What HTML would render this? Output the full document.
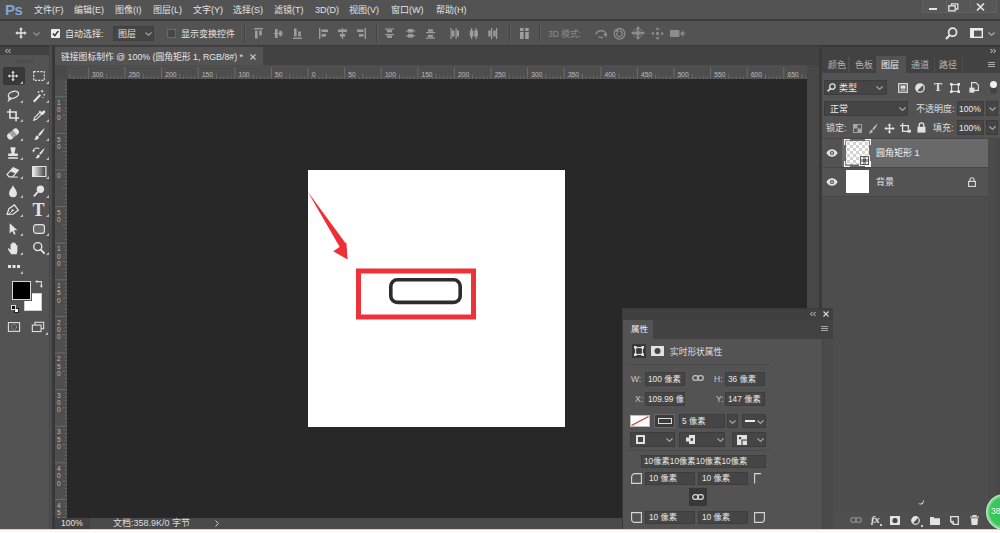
<!DOCTYPE html>
<html lang="zh-CN">
<head>
<meta charset="utf-8">
<title>链接图标制作 @ 100% (圆角矩形 1, RGB/8#) *</title>
<style>
*{box-sizing:border-box;margin:0;padding:0}
html,body{width:1000px;height:533px;overflow:hidden;background:#535353}
body{position:relative;font-family:"Liberation Sans","Noto Sans CJK SC",sans-serif;font-size:10px;color:#dcdcdc;line-height:1}
.a{position:absolute}
.t{position:absolute;white-space:nowrap;line-height:12px;height:12px}
/* main bars */
#menubar{left:0;top:0;width:1000px;height:21px;background:#535353;border-bottom:2px solid #3d3d3d}
#optbar{left:0;top:21px;width:1000px;height:26px;background:#535353;border-bottom:2px solid #3a3a3a}
#tabstrip{left:54px;top:46px;width:766px;height:19px;background:#424242}
#doctab{left:55px;top:47px;width:208px;height:18px;background:#535353}
#toolbox{left:0;top:46px;width:49px;height:483px;background:#535353}
#toolhead{left:0;top:46px;width:51px;height:9px;background:#424242;border-top:1px solid #383838}
#gap1{left:49px;top:46px;width:6px;height:483px;background:linear-gradient(90deg,#474747 0,#474747 1px,#4e4e4e 1px,#4e4e4e 3px,#383838 3px)}
#canvas{left:67px;top:79px;width:740px;height:439px;background:#282828}
#vscroll{left:807px;top:65px;width:12px;height:464px;background:#474747}
#status{left:55px;top:518px;width:752px;height:11px;background:#4a4a4a}
#bottom{left:0;top:529px;width:1000px;height:4px;background:#fbfaf6;border-top:1px solid #d6d2c8}
#doc{left:308px;top:170px;width:257px;height:257px;background:#fff}
#rpanel{left:822px;top:46px;width:178px;height:483px;background:#535353}

.m{position:absolute;top:4px;font-size:9px;line-height:12px;color:#e2e2e2;white-space:nowrap}
#ps{left:5px;top:1px;font-size:15px;line-height:18px;font-weight:bold;color:#7fa6d2;letter-spacing:-0.4px}
.o{position:absolute;font-size:9px;line-height:12px;color:#e2e2e2;white-space:nowrap}
svg{position:absolute;overflow:visible}

.p{position:absolute;font-size:9px;line-height:12px;height:12px;color:#dedede;white-space:nowrap}
.bx{position:absolute;background:#454545;border:1px solid #3d3d3d}
</style>
</head>
<body>
<div class="a" id="menubar">
<div class="a" id="ps">Ps</div>
<div class="m" style="left:34px">文件(F)</div>
<div class="m" style="left:74px">编辑(E)</div>
<div class="m" style="left:115px">图像(I)</div>
<div class="m" style="left:153px">图层(L)</div>
<div class="m" style="left:193px">文字(Y)</div>
<div class="m" style="left:233px">选择(S)</div>
<div class="m" style="left:274px">滤镜(T)</div>
<div class="m" style="left:315px">3D(D)</div>
<div class="m" style="left:349px">视图(V)</div>
<div class="m" style="left:391px">窗口(W)</div>
<div class="m" style="left:436px">帮助(H)</div>
<div class="a" style="left:922px;top:0;width:75px;height:13px;background:#575757;border:1px solid #616161;border-top:0"></div>
<div class="a" style="left:946px;top:0;width:1px;height:13px;background:#616161"></div>
<div class="a" style="left:970px;top:0;width:1px;height:13px;background:#616161"></div>
<div class="a" style="left:929px;top:8px;width:8px;height:2px;background:#e4e4e4"></div>
<svg style="left:948px;top:3px" width="11" height="9" viewBox="0 0 11 9"><path d="M3.5 2.5V0.8H9.8V6H8" fill="none" stroke="#dedede" stroke-width="1.3"/><rect x="0.8" y="2.8" width="6.4" height="5" fill="none" stroke="#dedede" stroke-width="1.4"/></svg>
<svg style="left:976px;top:3px" width="9" height="8" viewBox="0 0 9 8"><path d="M1 0.5L8 7.5M8 0.5L1 7.5" stroke="#e6e6e6" stroke-width="1.7"/></svg>
</div>
<div class="a" id="optbar">
<svg style="left:15px;top:6px" width="12" height="12" viewBox="0 0 12 12"><path d="M6 0.3L8 2.6H6.7V5.3H9.4V4L11.7 6L9.4 8V6.7H6.7V9.4H8L6 11.7L4 9.4H5.3V6.7H2.6V8L0.3 6L2.6 4V5.3H5.3V2.6H4Z" fill="#e6e6e6"/></svg>
<svg style="left:33px;top:11px" width="7" height="4" viewBox="0 0 7 4"><path d="M0.5 0.5L3.5 3.3L6.5 0.5" fill="none" stroke="#9c9c9c" stroke-width="1.1"/></svg>
<div class="a" style="left:51px;top:8px;width:9px;height:9px;background:#ececec;border-radius:1px"></div>
<svg style="left:52px;top:9px" width="7" height="7" viewBox="0 0 7 7"><path d="M0.8 3.4L2.8 5.6L6.3 1" fill="none" stroke="#333" stroke-width="1.5"/></svg>
<div class="o" style="left:65px;top:7px">自动选择:</div>
<div class="a" style="left:113px;top:5px;width:41px;height:15px;background:#454545;border:1px solid #3e3e3e"></div>
<div class="o" style="left:118px;top:7px">图层</div>
<svg style="left:145px;top:11px" width="7" height="4" viewBox="0 0 7 4"><path d="M0.5 0.5L3.5 3.3L6.5 0.5" fill="none" stroke="#a8a8a8" stroke-width="1.1"/></svg>
<div class="a" style="left:167px;top:8px;width:9px;height:9px;background:#474747;border:1px solid #6a6a6a"></div>
<div class="o" style="left:181px;top:7px">显示变换控件</div>
<div class="a" style="left:244px;top:3px;width:1px;height:19px;background:#444"></div><div class="a" style="left:245px;top:3px;width:1px;height:19px;background:#5d5d5d"></div>
<svg style="left:254px;top:7px" width="9" height="11" viewBox="0 0 9 11"><rect x="0" y="0" width="9" height="1.4" fill="#9d9d9d"/><rect x="1" y="2.5" width="2.6" height="8" fill="#9d9d9d"/><rect x="5.2" y="2.5" width="2.6" height="5" fill="#9d9d9d"/></svg>
<svg style="left:274px;top:7px" width="9" height="11" viewBox="0 0 9 11"><rect x="0" y="4.8" width="9" height="1.2" fill="#9d9d9d"/><rect x="1" y="1" width="2.6" height="9" fill="#9d9d9d"/><rect x="5.2" y="2.8" width="2.6" height="5.4" fill="#9d9d9d"/></svg>
<svg style="left:293px;top:7px" width="9" height="11" viewBox="0 0 9 11"><rect x="0" y="9.6" width="9" height="1.4" fill="#9d9d9d"/><rect x="1" y="0.5" width="2.6" height="8" fill="#9d9d9d"/><rect x="5.2" y="3.5" width="2.6" height="5" fill="#9d9d9d"/></svg>
<svg style="left:319px;top:7px" width="9" height="11" viewBox="0 0 9 11"><rect x="0" y="0" width="1.4" height="11" fill="#9d9d9d"/><rect x="2.5" y="1.5" width="6.5" height="2.6" fill="#9d9d9d"/><rect x="2.5" y="6" width="4.5" height="2.6" fill="#9d9d9d"/></svg>
<svg style="left:338px;top:7px" width="9" height="11" viewBox="0 0 9 11"><rect x="3.9" y="0" width="1.2" height="11" fill="#9d9d9d"/><rect x="0" y="1.5" width="9" height="2.6" fill="#9d9d9d"/><rect x="1.8" y="6" width="5.4" height="2.6" fill="#9d9d9d"/></svg>
<svg style="left:357px;top:7px" width="9" height="11" viewBox="0 0 9 11"><rect x="7.6" y="0" width="1.4" height="11" fill="#9d9d9d"/><rect x="0" y="1.5" width="6.5" height="2.6" fill="#9d9d9d"/><rect x="2" y="6" width="4.5" height="2.6" fill="#9d9d9d"/></svg>
<div class="a" style="left:376px;top:3px;width:1px;height:19px;background:#444"></div><div class="a" style="left:377px;top:3px;width:1px;height:19px;background:#5d5d5d"></div>
<svg style="left:385px;top:7px" width="9" height="11" viewBox="0 0 9 11"><rect x="0" y="0.5" width="9" height="1.2" fill="#9d9d9d"/><rect x="2" y="2" width="5" height="2.4" fill="#9d9d9d"/><rect x="0" y="6" width="9" height="1.2" fill="#9d9d9d"/><rect x="2" y="7.5" width="5" height="2.4" fill="#9d9d9d"/></svg>
<svg style="left:406px;top:7px" width="9" height="11" viewBox="0 0 9 11"><rect x="0" y="2.3" width="9" height="1.2" fill="#9d9d9d"/><rect x="2" y="1" width="5" height="3.6" fill="#9d9d9d"/><rect x="0" y="7.3" width="9" height="1.2" fill="#9d9d9d"/><rect x="2" y="6" width="5" height="3.6" fill="#9d9d9d"/></svg>
<svg style="left:426px;top:7px" width="9" height="11" viewBox="0 0 9 11"><rect x="0" y="4" width="9" height="1.2" fill="#9d9d9d"/><rect x="2" y="1.3" width="5" height="2.4" fill="#9d9d9d"/><rect x="0" y="9.5" width="9" height="1.2" fill="#9d9d9d"/><rect x="2" y="6.8" width="5" height="2.4" fill="#9d9d9d"/></svg>
<svg style="left:450px;top:7px" width="9" height="11" viewBox="0 0 9 11"><rect x="0.5" y="0" width="1.2" height="11" fill="#9d9d9d"/><rect x="2" y="2.5" width="2.4" height="6" fill="#9d9d9d"/><rect x="5.5" y="0" width="1.2" height="11" fill="#9d9d9d"/><rect x="7" y="2.5" width="2" height="6" fill="#9d9d9d"/></svg>
<svg style="left:469px;top:7px" width="9" height="11" viewBox="0 0 9 11"><rect x="2" y="0" width="1.2" height="11" fill="#9d9d9d"/><rect x="0.8" y="2.5" width="3.6" height="6" fill="#9d9d9d"/><rect x="6.5" y="0" width="1.2" height="11" fill="#9d9d9d"/><rect x="5.3" y="2.5" width="3.6" height="6" fill="#9d9d9d"/></svg>
<svg style="left:488px;top:7px" width="9" height="11" viewBox="0 0 9 11"><rect x="3" y="0" width="1.2" height="11" fill="#9d9d9d"/><rect x="0.3" y="2.5" width="2.4" height="6" fill="#9d9d9d"/><rect x="8" y="0" width="1.2" height="11" fill="#9d9d9d"/><rect x="5.3" y="2.5" width="2.4" height="6" fill="#9d9d9d"/></svg>
<div class="a" style="left:509px;top:3px;width:1px;height:19px;background:#444"></div><div class="a" style="left:510px;top:3px;width:1px;height:19px;background:#5d5d5d"></div>
<svg style="left:520px;top:7px" width="9" height="11" viewBox="0 0 9 11"><rect x="0" y="0" width="3.6" height="3" fill="#9d9d9d"/><rect x="5.2" y="0" width="3.6" height="3" fill="#9d9d9d"/><rect x="0" y="4" width="3.6" height="7" fill="#9d9d9d"/><rect x="5.2" y="4" width="3.6" height="7" fill="#9d9d9d"/></svg>
<div class="a" style="left:539px;top:3px;width:1px;height:19px;background:#444"></div><div class="a" style="left:540px;top:3px;width:1px;height:19px;background:#5d5d5d"></div>
<div class="o" style="left:548px;top:7px;color:#8a8a8a;font-size:8.6px">3D 模式:</div>
<svg style="left:594px;top:6px" width="14" height="13" viewBox="0 0 14 13"><path d="M2 7.5A5 3.6 0 1 1 11.5 8.8" fill="none" stroke="#8c8c8c" stroke-width="1.5"/><path d="M9 7L12 10.5L13.5 6.5Z" fill="#8c8c8c"/><path d="M4.5 9.5A4 2 0 0 0 9 10.5" fill="none" stroke="#8c8c8c" stroke-width="1.3"/></svg>
<svg style="left:613px;top:6px" width="13" height="13" viewBox="0 0 13 13"><circle cx="6.5" cy="6.8" r="5.3" fill="none" stroke="#8c8c8c" stroke-width="1.3"/><path d="M3.8 6A2.8 2.8 0 1 0 6.5 4" fill="none" stroke="#8c8c8c" stroke-width="1.3"/><path d="M2 3.5L5.5 2.5L4.8 6Z" fill="#8c8c8c"/></svg>
<svg style="left:631px;top:5px" width="14" height="14" viewBox="0 0 14 14"><path d="M7 0L9.3 3H7.9V6.1H11V4.7L14 7L11 9.3V7.9H7.9V11H9.3L7 14L4.7 11H6.1V7.9H3V9.3L0 7L3 4.7V6.1H6.1V3H4.7Z" fill="#8c8c8c"/><path d="M3 3L11 11M11 3L3 11" stroke="#8c8c8c" stroke-width="0.9"/></svg>
<svg style="left:651px;top:6px" width="13" height="13" viewBox="0 0 13 13"><path d="M6.5 0L8.6 2.8H4.4ZM6.5 13L8.6 10.2H4.4ZM0 6.5L2.8 4.4V8.6ZM13 6.5L10.2 4.4V8.6Z" fill="#8c8c8c"/><circle cx="6.5" cy="6.5" r="1.7" fill="#8c8c8c"/></svg>
<svg style="left:670px;top:8px" width="15" height="9" viewBox="0 0 15 9"><rect x="0" y="1" width="9.5" height="7" rx="1" fill="#8c8c8c"/><path d="M10 4.5L13.5 1.2V7.8Z" fill="#8c8c8c"/><path d="M13.5 3L15 4.5L13.5 6" fill="none" stroke="#8c8c8c" stroke-width="0.9"/></svg>
<svg style="left:945px;top:6px" width="13" height="13" viewBox="0 0 13 13"><circle cx="7.6" cy="5.2" r="4" fill="none" stroke="#e8e8e8" stroke-width="1.7"/><path d="M4.6 8.2L1 12" stroke="#e8e8e8" stroke-width="2"/></svg>
<svg style="left:970px;top:7px" width="13" height="10" viewBox="0 0 13 10"><rect x="0.7" y="0.7" width="11.6" height="8.6" fill="#555" stroke="#ececec" stroke-width="1.4"/><rect x="1" y="1" width="11" height="1.6" fill="#ececec"/><rect x="1" y="1" width="3" height="8" fill="#ececec"/></svg>
<svg style="left:988px;top:11px" width="7" height="4" viewBox="0 0 7 4"><path d="M0.5 0.5L3.5 3.3L6.5 0.5" fill="none" stroke="#b4b4b4" stroke-width="1.1"/></svg>
</div>
<div class="a" id="tabstrip"></div>
<div class="a" id="doctab"></div>
<div class="t" id="tabtxt" style="left:61px;top:51px;font-size:8.8px;color:#e6e6e6">链接图标制作 @ 100% (圆角矩形 1, RGB/8#) *</div>
<svg style="left:250px;top:54px" width="6" height="6" viewBox="0 0 6 6"><path d="M0.5 0.5L5.5 5.5M5.5 0.5L0.5 5.5" stroke="#c8c8c8" stroke-width="1.1"/></svg>
<div class="a" id="toolbox"></div>
<div class="a" id="toolhead"></div>
<svg style="left:5px;top:49px" width="6" height="4" viewBox="0 0 6 4"><path d="M2.5 0L0.5 2L2.5 4M5.5 0L3.5 2L5.5 4" fill="none" stroke="#d0d0d0" stroke-width="1"/></svg>
<div class="a" style="left:17px;top:60px;width:17px;height:1px;background:#484848"></div><div class="a" style="left:17px;top:62px;width:17px;height:1px;background:#484848"></div>
<div class="a" style="left:3px;top:67px;width:22px;height:18px;background:#383838;border-radius:2px"></div>
<svg style="left:7px;top:70px" width="12" height="12" viewBox="0 0 16 16"><path d="M8 1L10.4 3.8H8.8V7.2H12.2V5.6L15 8L12.2 10.4V8.8H8.8V12.2H10.4L8 15L5.6 12.2H7.2V8.8H3.8V10.4L1 8L3.8 5.6V7.2H7.2V3.8H5.6Z" fill="#e4e4e4"/></svg>
<svg style="left:31.5px;top:69px" width="14" height="14" viewBox="0 0 16 16"><rect x="2" y="3" width="12" height="10" fill="none" stroke="#e4e4e4" stroke-width="1.3" stroke-dasharray="2.4 1.4"/></svg>
<svg style="left:6px;top:88.5px" width="14" height="14" viewBox="0 0 16 16"><ellipse cx="8.5" cy="6.5" rx="6" ry="3.8" transform="rotate(-18 8.5 6.5)" fill="none" stroke="#e4e4e4" stroke-width="1.5"/><path d="M4 9.5C2.5 10.5 2.6 12.6 4.6 12.6C6.2 12.6 5.8 10.5 4.4 10.8C3.6 11 3 12.8 2.2 14.5" fill="none" stroke="#e4e4e4" stroke-width="1.2"/></svg>
<svg style="left:31.5px;top:88.5px" width="14" height="14" viewBox="0 0 16 16"><path d="M2 14.5L9.5 6.5" stroke="#e4e4e4" stroke-width="2.4"/><path d="M11.5 1V4M10 2.5H13M14 5.5V7.5M13 6.5H15M7.5 2.5V4.5M6.5 3.5H8.5M12.5 9V10.4" stroke="#e4e4e4" stroke-width="1"/></svg>
<svg style="left:6px;top:107.5px" width="14" height="14" viewBox="0 0 16 16"><path d="M4.5 1V11.5H15M1 4.5H11.5V15" fill="none" stroke="#e4e4e4" stroke-width="1.8"/></svg>
<svg style="left:31.5px;top:107.5px" width="14" height="14" viewBox="0 0 16 16"><path d="M2 14L3 11L9 5L11 7L5 13Z" fill="none" stroke="#e4e4e4" stroke-width="1.3"/><path d="M8.5 3.5L12.5 7.5" stroke="#e4e4e4" stroke-width="1.8"/><path d="M10 5.8L12.6 3.2A1.6 1.6 0 0 1 14.9 5.4L12.2 8Z" fill="#e4e4e4"/></svg>
<svg style="left:6px;top:126.5px" width="14" height="14" viewBox="0 0 16 16"><g transform="rotate(-40 8 8)"><rect x="0.5" y="4.3" width="15" height="7.4" rx="3.4" fill="#e4e4e4"/><rect x="5.4" y="4.3" width="5.2" height="7.4" fill="#535353" opacity="0.55"/><circle cx="7" cy="6.5" r="0.6" fill="#e4e4e4"/><circle cx="9" cy="6.5" r="0.6" fill="#e4e4e4"/><circle cx="7" cy="9.5" r="0.6" fill="#e4e4e4"/><circle cx="9" cy="9.5" r="0.6" fill="#e4e4e4"/></g></svg>
<svg style="left:31.5px;top:126.5px" width="14" height="14" viewBox="0 0 16 16"><path d="M14.5 1.2C12 3 8.5 6.5 7 9L8.6 10.4C11 8.5 13.5 4.5 14.5 1.2Z" fill="#e4e4e4"/><path d="M6.3 9.8C4.5 9.8 4 11.5 3.8 12.6C3.6 13.6 2.6 14.2 1.8 14.4C4.5 15.3 7.8 14 7.9 11.3Z" fill="#e4e4e4"/></svg>
<svg style="left:6px;top:145.5px" width="14" height="14" viewBox="0 0 16 16"><path d="M6 1.5H10C11 1.5 11.2 2.5 10.8 3.5L9.8 7V8.5H13.5V11.5H2.5V8.5H6.2V7L5.2 3.5C4.8 2.5 5 1.5 6 1.5Z" fill="#e4e4e4"/><rect x="2.5" y="12.8" width="11" height="1.8" fill="#e4e4e4"/></svg>
<svg style="left:31.5px;top:145.5px" width="14" height="14" viewBox="0 0 16 16"><path d="M14.5 2.2C12.2 3.8 9.5 6.6 8.2 8.8L9.6 10C11.6 8.4 13.6 5.2 14.5 2.2Z" fill="#e4e4e4"/><path d="M7.6 9.6C6 9.6 5.6 11 5.4 12C5.2 13 4.4 13.5 3.6 13.7C6 14.5 9 13.4 9 11Z" fill="#e4e4e4"/><path d="M1.5 6A4 4 0 0 1 8.3 3.4" fill="none" stroke="#e4e4e4" stroke-width="1.2"/><path d="M0.3 4.6L1.6 7.4L3.6 5.2Z" fill="#e4e4e4"/></svg>
<svg style="left:6px;top:164.5px" width="14" height="14" viewBox="0 0 16 16"><path d="M1.2 10.8L8.2 3.2L14.2 6L7.4 13.6H3.6Z" fill="none" stroke="#e4e4e4" stroke-width="1.3"/><path d="M8.2 3.2L14.2 6L10.8 9.8L4.8 7Z" fill="#e4e4e4"/><path d="M7.4 13.8H13.5" stroke="#e4e4e4" stroke-width="1.2"/></svg>
<svg style="left:31.5px;top:166px" preserveAspectRatio="none" width="14.5" height="11" viewBox="0 0 14 13"><defs><linearGradient id="gr" x1="0" x2="1" y1="0" y2="0"><stop offset="0" stop-color="#f2f2f2"/><stop offset="1" stop-color="#3c3c3c"/></linearGradient></defs><rect x="0.6" y="0.6" width="12.8" height="11.8" fill="url(#gr)" stroke="#e4e4e4" stroke-width="1.2"/></svg>
<svg style="left:6px;top:183.5px" width="14" height="14" viewBox="0 0 16 16"><path d="M8 1.5C9.5 5 12.5 7.5 12.5 10.5A4.5 4.5 0 0 1 3.5 10.5C3.5 7.5 6.5 5 8 1.5Z" fill="#e4e4e4"/></svg>
<svg style="left:31.5px;top:183.5px" width="14" height="14" viewBox="0 0 16 16"><circle cx="9.6" cy="6" r="4.2" fill="#e4e4e4"/><path d="M6.6 9L2.2 14.2" stroke="#e4e4e4" stroke-width="2"/></svg>
<svg style="left:6px;top:202.5px" width="14" height="14" viewBox="0 0 16 16"><path d="M2 14L3.2 7.2L8.8 2L14 7.2L8.8 12.8Z" fill="none" stroke="#e4e4e4" stroke-width="1.4" transform="rotate(8 8 8)"/><circle cx="7.6" cy="8.4" r="1.3" fill="#e4e4e4"/><path d="M2.2 13.8L7 9" stroke="#e4e4e4" stroke-width="1"/></svg>
<div class="a" style="left:31.5px;top:200.5px;width:14px;height:18px;font-family:'Liberation Serif',serif;font-weight:bold;font-size:18px;line-height:18px;color:#e4e4e4;text-align:center">T</div>
<svg style="left:6px;top:221.5px" width="14" height="14" viewBox="0 0 16 16"><path d="M4.2 1.5V13L7.2 10.2L9.2 14.6L11 13.8L9 9.5H13Z" fill="#e4e4e4"/></svg>
<svg style="left:31.5px;top:221.5px" width="14" height="14" viewBox="0 0 16 16"><rect x="1.8" y="3" width="12.4" height="10" rx="2.6" fill="#6c6c6c" stroke="#e4e4e4" stroke-width="1.3"/></svg>
<svg style="left:6px;top:240.5px" width="14" height="14" viewBox="0 0 16 16"><path d="M4.6 14.6C3.5 12.6 1.6 10.6 1 9C0.8 8 2 7.6 2.8 8.6L4 10V3.4C4 2.4 5.5 2.4 5.5 3.4V7V2.2C5.5 1.2 7.1 1.2 7.1 2.2V7V1.8C7.1 0.8 8.7 0.8 8.7 1.8V7V2.8C8.7 1.8 10.3 1.8 10.3 2.8V7.5V4.8C10.3 3.8 11.8 3.8 11.8 4.8V10.5C11.8 12 11.4 13.4 10.8 14.6Z" fill="#e4e4e4" transform="translate(1.2 0.4)"/></svg>
<svg style="left:31.5px;top:240.5px" width="14" height="14" viewBox="0 0 16 16"><circle cx="6.6" cy="6.4" r="4.6" fill="none" stroke="#e4e4e4" stroke-width="1.6"/><path d="M10 9.8L14.4 14.4" stroke="#e4e4e4" stroke-width="2.2"/></svg>
<div class="a" style="left:8px;top:265.0px;width:3px;height:3px;background:#e4e4e4;box-shadow:4.5px 0 0 #e4e4e4,9px 0 0 #e4e4e4"></div>
<svg style="left:20.2px;top:80.5px" width="3" height="3" viewBox="0 0 3 3"><path d="M3 0V3H0Z" fill="#bdbdbd"/></svg>
<svg style="left:45.7px;top:80.5px" width="3" height="3" viewBox="0 0 3 3"><path d="M3 0V3H0Z" fill="#bdbdbd"/></svg>
<svg style="left:20.2px;top:100px" width="3" height="3" viewBox="0 0 3 3"><path d="M3 0V3H0Z" fill="#bdbdbd"/></svg>
<svg style="left:45.7px;top:100px" width="3" height="3" viewBox="0 0 3 3"><path d="M3 0V3H0Z" fill="#bdbdbd"/></svg>
<svg style="left:20.2px;top:119px" width="3" height="3" viewBox="0 0 3 3"><path d="M3 0V3H0Z" fill="#bdbdbd"/></svg>
<svg style="left:45.7px;top:119px" width="3" height="3" viewBox="0 0 3 3"><path d="M3 0V3H0Z" fill="#bdbdbd"/></svg>
<svg style="left:20.2px;top:138px" width="3" height="3" viewBox="0 0 3 3"><path d="M3 0V3H0Z" fill="#bdbdbd"/></svg>
<svg style="left:45.7px;top:138px" width="3" height="3" viewBox="0 0 3 3"><path d="M3 0V3H0Z" fill="#bdbdbd"/></svg>
<svg style="left:20.2px;top:157px" width="3" height="3" viewBox="0 0 3 3"><path d="M3 0V3H0Z" fill="#bdbdbd"/></svg>
<svg style="left:45.7px;top:157px" width="3" height="3" viewBox="0 0 3 3"><path d="M3 0V3H0Z" fill="#bdbdbd"/></svg>
<svg style="left:20.2px;top:176px" width="3" height="3" viewBox="0 0 3 3"><path d="M3 0V3H0Z" fill="#bdbdbd"/></svg>
<svg style="left:45.7px;top:176px" width="3" height="3" viewBox="0 0 3 3"><path d="M3 0V3H0Z" fill="#bdbdbd"/></svg>
<svg style="left:20.2px;top:195px" width="3" height="3" viewBox="0 0 3 3"><path d="M3 0V3H0Z" fill="#bdbdbd"/></svg>
<svg style="left:45.7px;top:195px" width="3" height="3" viewBox="0 0 3 3"><path d="M3 0V3H0Z" fill="#bdbdbd"/></svg>
<svg style="left:20.2px;top:214px" width="3" height="3" viewBox="0 0 3 3"><path d="M3 0V3H0Z" fill="#bdbdbd"/></svg>
<svg style="left:45.7px;top:214px" width="3" height="3" viewBox="0 0 3 3"><path d="M3 0V3H0Z" fill="#bdbdbd"/></svg>
<svg style="left:20.2px;top:233px" width="3" height="3" viewBox="0 0 3 3"><path d="M3 0V3H0Z" fill="#bdbdbd"/></svg>
<svg style="left:45.7px;top:233px" width="3" height="3" viewBox="0 0 3 3"><path d="M3 0V3H0Z" fill="#bdbdbd"/></svg>
<svg style="left:20.2px;top:252px" width="3" height="3" viewBox="0 0 3 3"><path d="M3 0V3H0Z" fill="#bdbdbd"/></svg>
<svg style="left:45.7px;top:252px" width="3" height="3" viewBox="0 0 3 3"><path d="M3 0V3H0Z" fill="#bdbdbd"/></svg>
<svg style="left:20.2px;top:271px" width="3" height="3" viewBox="0 0 3 3"><path d="M3 0V3H0Z" fill="#bdbdbd"/></svg>
<div class="a" style="left:24px;top:293px;width:18px;height:18px;background:#fff;border:1px solid #cfcfcf"></div>
<div class="a" style="left:12px;top:281px;width:19px;height:19px;background:#000;border:1px solid #d8d8d8;box-shadow:0 0 0 1px #535353"></div>
<svg style="left:35px;top:280px" width="9" height="8" viewBox="0 0 9 8"><path d="M2 1.6H6.4V6" fill="none" stroke="#d8d8d8" stroke-width="1.1"/><path d="M0 1.6L2.4 0V3.2ZM6.4 8L4.8 5.6H8Z" fill="#d8d8d8"/></svg>
<div class="a" style="left:14px;top:308px;width:5px;height:5px;background:#fff;border:0.5px solid #222"></div>
<div class="a" style="left:11px;top:305px;width:5px;height:5px;background:#111;border:0.5px solid #ddd"></div>
<svg style="left:6.5px;top:319.5px" width="14" height="14" viewBox="0 0 16 16"><rect x="1.6" y="3" width="12.8" height="10" fill="none" stroke="#e4e4e4" stroke-width="1.2"/><ellipse cx="8" cy="8" rx="3" ry="3" fill="none" stroke="#aaa" stroke-width="1" stroke-dasharray="1.2 1"/></svg>
<svg style="left:31px;top:319.5px" width="14" height="14" viewBox="0 0 16 16"><rect x="4.5" y="2.6" width="10" height="7.4" fill="none" stroke="#e4e4e4" stroke-width="1.2"/><rect x="1.5" y="5.8" width="10" height="7.4" fill="#535353" stroke="#e4e4e4" stroke-width="1.2"/></svg>
<svg style="left:45.2px;top:331.5px" width="3" height="3" viewBox="0 0 3 3"><path d="M3 0V3H0Z" fill="#bdbdbd"/></svg>
<div class="a" id="gap1"></div>
<svg id="hruler" style="left:55px;top:65px" width="752" height="14" viewBox="0 0 752 14">
<rect width="752" height="14" fill="#4e4e4e"/>
<rect x="0" y="0" width="12" height="14" fill="#4a4a4a"/>
<path d="M15.1 9V14M18.8 11.5V14M22.4 11.5V14M26.1 11.5V14M29.7 11.5V14M33.4 2V14M37.1 11.5V14M40.7 11.5V14M44.4 11.5V14M48.0 11.5V14M51.7 9V14M55.4 11.5V14M59.0 11.5V14M62.7 11.5V14M66.3 11.5V14M70.0 2V14M73.7 11.5V14M77.3 11.5V14M81.0 11.5V14M84.6 11.5V14M88.3 9V14M92.0 11.5V14M95.6 11.5V14M99.3 11.5V14M102.9 11.5V14M106.6 2V14M110.3 11.5V14M113.9 11.5V14M117.6 11.5V14M121.2 11.5V14M124.9 9V14M128.6 11.5V14M132.2 11.5V14M135.9 11.5V14M139.5 11.5V14M143.2 2V14M146.9 11.5V14M150.5 11.5V14M154.2 11.5V14M157.8 11.5V14M161.5 9V14M165.2 11.5V14M168.8 11.5V14M172.5 11.5V14M176.1 11.5V14M179.8 2V14M183.5 11.5V14M187.1 11.5V14M190.8 11.5V14M194.4 11.5V14M198.1 9V14M201.8 11.5V14M205.4 11.5V14M209.1 11.5V14M212.7 11.5V14M216.4 2V14M220.1 11.5V14M223.7 11.5V14M227.4 11.5V14M231.0 11.5V14M234.7 9V14M238.4 11.5V14M242.0 11.5V14M245.7 11.5V14M249.3 11.5V14M253.0 2V14M256.7 11.5V14M260.3 11.5V14M264.0 11.5V14M267.6 11.5V14M271.3 9V14M275.0 11.5V14M278.6 11.5V14M282.3 11.5V14M285.9 11.5V14M289.6 2V14M293.3 11.5V14M296.9 11.5V14M300.6 11.5V14M304.2 11.5V14M307.9 9V14M311.6 11.5V14M315.2 11.5V14M318.9 11.5V14M322.5 11.5V14M326.2 2V14M329.9 11.5V14M333.5 11.5V14M337.2 11.5V14M340.8 11.5V14M344.5 9V14M348.2 11.5V14M351.8 11.5V14M355.5 11.5V14M359.1 11.5V14M362.8 2V14M366.5 11.5V14M370.1 11.5V14M373.8 11.5V14M377.4 11.5V14M381.1 9V14M384.8 11.5V14M388.4 11.5V14M392.1 11.5V14M395.7 11.5V14M399.4 2V14M403.1 11.5V14M406.7 11.5V14M410.4 11.5V14M414.0 11.5V14M417.7 9V14M421.4 11.5V14M425.0 11.5V14M428.7 11.5V14M432.3 11.5V14M436.0 2V14M439.7 11.5V14M443.3 11.5V14M447.0 11.5V14M450.6 11.5V14M454.3 9V14M458.0 11.5V14M461.6 11.5V14M465.3 11.5V14M468.9 11.5V14M472.6 2V14M476.3 11.5V14M479.9 11.5V14M483.6 11.5V14M487.2 11.5V14M490.9 9V14M494.6 11.5V14M498.2 11.5V14M501.9 11.5V14M505.5 11.5V14M509.2 2V14M512.9 11.5V14M516.5 11.5V14M520.2 11.5V14M523.8 11.5V14M527.5 9V14M531.2 11.5V14M534.8 11.5V14M538.5 11.5V14M542.1 11.5V14M545.8 2V14M549.5 11.5V14M553.1 11.5V14M556.8 11.5V14M560.4 11.5V14M564.1 9V14M567.8 11.5V14M571.4 11.5V14M575.1 11.5V14M578.7 11.5V14M582.4 2V14M586.1 11.5V14M589.7 11.5V14M593.4 11.5V14M597.0 11.5V14M600.7 9V14M604.4 11.5V14M608.0 11.5V14M611.7 11.5V14M615.3 11.5V14M619.0 2V14M622.7 11.5V14M626.3 11.5V14M630.0 11.5V14M633.6 11.5V14M637.3 9V14M641.0 11.5V14M644.6 11.5V14M648.3 11.5V14M651.9 11.5V14M655.6 2V14M659.3 11.5V14M662.9 11.5V14M666.6 11.5V14M670.2 11.5V14M673.9 9V14M677.6 11.5V14M681.2 11.5V14M684.9 11.5V14M688.5 11.5V14M692.2 2V14M695.9 11.5V14M699.5 11.5V14M703.2 11.5V14M706.8 11.5V14M710.5 9V14M714.2 11.5V14M717.8 11.5V14M721.5 11.5V14M725.1 11.5V14M728.8 2V14M732.5 11.5V14M736.1 11.5V14M739.8 11.5V14M743.4 11.5V14M747.1 9V14M750.8 11.5V14" stroke="#747474" stroke-width="0.8" fill="none"/>
<g font-family="Liberation Sans, sans-serif" font-size="6.6" fill="#bdbdbd"><text x="37.1" y="12.4">300</text><text x="73.7" y="12.4">250</text><text x="110.3" y="12.4">200</text><text x="146.9" y="12.4">150</text><text x="183.5" y="12.4">100</text><text x="220.1" y="12.4">50</text><text x="256.7" y="12.4">0</text><text x="293.3" y="12.4">50</text><text x="329.9" y="12.4">100</text><text x="366.5" y="12.4">150</text><text x="403.1" y="12.4">200</text><text x="439.7" y="12.4">250</text><text x="476.3" y="12.4">300</text><text x="512.9" y="12.4">350</text><text x="549.5" y="12.4">400</text><text x="586.1" y="12.4">450</text><text x="622.7" y="12.4">500</text><text x="659.3" y="12.4">550</text><text x="695.9" y="12.4">600</text><text x="732.5" y="12.4">650</text></g>
</svg>
<svg id="vruler" style="left:55px;top:79px" width="12" height="439" viewBox="0 0 12 439">
<rect width="12" height="439" fill="#4e4e4e"/>
<path d="M9.8 3.2H12M9.8 6.8H12M9.8 10.5H12M9.8 14.1H12M0 17.8H12M9.8 21.5H12M9.8 25.1H12M9.8 28.8H12M9.8 32.4H12M7.5 36.1H12M9.8 39.8H12M9.8 43.4H12M9.8 47.1H12M9.8 50.7H12M0 54.4H12M9.8 58.1H12M9.8 61.7H12M9.8 65.4H12M9.8 69.0H12M7.5 72.7H12M9.8 76.4H12M9.8 80.0H12M9.8 83.7H12M9.8 87.3H12M0 91.0H12M9.8 94.7H12M9.8 98.3H12M9.8 102.0H12M9.8 105.6H12M7.5 109.3H12M9.8 113.0H12M9.8 116.6H12M9.8 120.3H12M9.8 123.9H12M0 127.6H12M9.8 131.3H12M9.8 134.9H12M9.8 138.6H12M9.8 142.2H12M7.5 145.9H12M9.8 149.6H12M9.8 153.2H12M9.8 156.9H12M9.8 160.5H12M0 164.2H12M9.8 167.9H12M9.8 171.5H12M9.8 175.2H12M9.8 178.8H12M7.5 182.5H12M9.8 186.2H12M9.8 189.8H12M9.8 193.5H12M9.8 197.1H12M0 200.8H12M9.8 204.5H12M9.8 208.1H12M9.8 211.8H12M9.8 215.4H12M7.5 219.1H12M9.8 222.8H12M9.8 226.4H12M9.8 230.1H12M9.8 233.7H12M0 237.4H12M9.8 241.1H12M9.8 244.7H12M9.8 248.4H12M9.8 252.0H12M7.5 255.7H12M9.8 259.4H12M9.8 263.0H12M9.8 266.7H12M9.8 270.3H12M0 274.0H12M9.8 277.7H12M9.8 281.3H12M9.8 285.0H12M9.8 288.6H12M7.5 292.3H12M9.8 296.0H12M9.8 299.6H12M9.8 303.3H12M9.8 306.9H12M0 310.6H12M9.8 314.3H12M9.8 317.9H12M9.8 321.6H12M9.8 325.2H12M7.5 328.9H12M9.8 332.6H12M9.8 336.2H12M9.8 339.9H12M9.8 343.5H12M0 347.2H12M9.8 350.9H12M9.8 354.5H12M9.8 358.2H12M9.8 361.8H12M7.5 365.5H12M9.8 369.2H12M9.8 372.8H12M9.8 376.5H12M9.8 380.1H12M0 383.8H12M9.8 387.5H12M9.8 391.1H12M9.8 394.8H12M9.8 398.4H12M7.5 402.1H12M9.8 405.8H12M9.8 409.4H12M9.8 413.1H12M9.8 416.7H12M0 420.4H12M9.8 424.1H12M9.8 427.7H12M9.8 431.4H12M9.8 435.0H12M7.5 438.7H12" stroke="#747474" stroke-width="0.8" fill="none"/>
<g font-family="Liberation Sans, sans-serif" font-size="6.6" fill="#bdbdbd"><text x="2" y="26.0">1</text><text x="2" y="33.3">0</text><text x="2" y="40.6">0</text><text x="2" y="62.6">5</text><text x="2" y="69.9">0</text><text x="2" y="99.2">0</text><text x="2" y="135.8">5</text><text x="2" y="143.1">0</text><text x="2" y="172.4">1</text><text x="2" y="179.7">0</text><text x="2" y="187.0">0</text><text x="2" y="209.0">1</text><text x="2" y="216.3">5</text><text x="2" y="223.6">0</text><text x="2" y="245.6">2</text><text x="2" y="252.9">0</text><text x="2" y="260.2">0</text><text x="2" y="282.2">2</text><text x="2" y="289.5">5</text><text x="2" y="296.8">0</text><text x="2" y="318.8">3</text><text x="2" y="326.1">0</text><text x="2" y="333.4">0</text><text x="2" y="355.4">3</text><text x="2" y="362.7">5</text><text x="2" y="370.0">0</text><text x="2" y="392.0">4</text><text x="2" y="399.3">0</text><text x="2" y="406.6">0</text><text x="2" y="428.6">4</text><text x="2" y="435.9">5</text><text x="2" y="443.2">0</text></g>
</svg>
<div class="a" id="canvas"></div>
<div class="a" id="vscroll"></div>
<div class="a" id="status"></div>
<div class="a" style="left:55px;top:518px;width:35px;height:11px;background:#424242"></div>
<div class="t" style="left:61px;top:518px;font-size:8.5px;color:#e2e2e2;line-height:11px;height:11px">100%</div>
<div class="t" style="left:113px;top:518px;font-size:9px;color:#dedede;line-height:11px;height:11px">文档:358.9K/0 字节</div>
<svg style="left:215px;top:520px" width="4" height="7" viewBox="0 0 4 7"><path d="M0.5 0.5L3.3 3.5L0.5 6.5" fill="none" stroke="#cfcfcf" stroke-width="1"/></svg>
<div class="a" id="doc"></div>
<svg style="left:300px;top:180px" width="190" height="150" viewBox="300 180 190 150">
<path d="M307.6 191.5L340.6 248.6L345.8 243.4Z" fill="#ee2f36"/>
<path d="M347.6 259.6L333.2 251.2L346.4 242.6Z" fill="#ee2f36"/>
<rect x="358.5" y="271" width="115" height="46" fill="none" stroke="#ee3338" stroke-width="5"/>
<rect x="390.8" y="279.8" width="69.4" height="22.6" rx="6.5" fill="none" stroke="#2e2b2f" stroke-width="3.6"/>
</svg>
<div class="a" id="rpanel"></div>
<div class="a" style="left:819px;top:46px;width:3px;height:483px;background:#3a3a3a"></div>
<div class="a" style="left:822px;top:46px;width:178px;height:10px;background:#424242;border-top:1px solid #383838"></div>
<svg style="left:990px;top:49px" width="6" height="4" viewBox="0 0 6 4"><path d="M0.5 0L2.5 2L0.5 4M3.5 0L5.5 2L3.5 4" fill="none" stroke="#d4d4d4" stroke-width="1"/></svg>
<div class="a" style="left:822px;top:56px;width:178px;height:17px;background:#424242"></div>
<div class="a" style="left:848px;top:57px;width:2px;height:15px;background:#4e4e4e"></div>
<div class="a" style="left:876px;top:56px;width:30px;height:17px;background:#535353"></div>
<div class="a" style="left:934px;top:57px;width:1px;height:15px;background:#4e4e4e"></div>
<div class="a" style="left:962px;top:57px;width:1px;height:15px;background:#4e4e4e"></div>
<div class="p" style="left:828px;top:59px;color:#b4b4b4">颜色</div>
<div class="p" style="left:855px;top:59px;color:#b4b4b4">色板</div>
<div class="p" style="left:881px;top:59px;color:#f0f0f0">图层</div>
<div class="p" style="left:911px;top:59px;color:#b4b4b4">通道</div>
<div class="p" style="left:939px;top:59px;color:#b4b4b4">路径</div>
<div class="a" style="left:988px;top:62px;width:7px;height:1px;background:#aaa;box-shadow:0 2px 0 #aaa,0 4px 0 #aaa"></div>
<div class="bx" style="left:824px;top:80px;width:63px;height:15px"></div>
<svg style="left:827px;top:83px" width="9" height="9" viewBox="0 0 9 9"><circle cx="5.4" cy="3.6" r="2.7" fill="none" stroke="#e2e2e2" stroke-width="1.3"/><path d="M3.4 5.6L0.6 8.4" stroke="#e2e2e2" stroke-width="1.5"/></svg>
<div class="p" style="left:839px;top:82px;color:#ececec">类型</div>
<svg style="left:876px;top:86px" width="7" height="4" viewBox="0 0 7 4"><path d="M0.5 0.5L3.5 3.3L6.5 0.5" fill="none" stroke="#b0b0b0" stroke-width="1.1"/></svg>
<svg style="left:898px;top:83px" width="10" height="10" viewBox="0 0 10 10"><rect x="0.7" y="0.7" width="8.6" height="8.6" fill="none" stroke="#e2e2e2" stroke-width="1.2"/><rect x="2.5" y="2.5" width="5" height="3.2" fill="#e2e2e2"/><rect x="2.5" y="6.6" width="5" height="1" fill="#e2e2e2"/></svg>
<svg style="left:915px;top:83px" width="10" height="10" viewBox="0 0 10 10"><circle cx="5" cy="5" r="4.2" fill="none" stroke="#e2e2e2" stroke-width="1.3"/><path d="M5 0.8A4.2 4.2 0 0 0 2 8L8 2A4.2 4.2 0 0 0 5 0.8Z" fill="#e2e2e2"/></svg>
<div class="a" style="left:933px;top:81px;width:10px;height:13px;font-family:'Liberation Serif',serif;font-weight:bold;font-size:12px;line-height:13px;color:#e2e2e2;text-align:center">T</div>
<svg style="left:950px;top:83px" width="10" height="10" viewBox="0 0 10 10"><rect x="1.6" y="1.6" width="6.8" height="6.8" fill="none" stroke="#e2e2e2" stroke-width="1.1"/><rect x="0" y="0" width="2.6" height="2.6" fill="#e2e2e2"/><rect x="7.4" y="0" width="2.6" height="2.6" fill="#e2e2e2"/><rect x="0" y="7.4" width="2.6" height="2.6" fill="#e2e2e2"/><rect x="7.4" y="7.4" width="2.6" height="2.6" fill="#e2e2e2"/></svg>
<svg style="left:969px;top:82px" width="10" height="11" viewBox="0 0 10 11"><path d="M2.6 0.6H6.8L9.4 3.2V8.4H2.6Z" fill="none" stroke="#e2e2e2" stroke-width="1.1"/><rect x="0.4" y="5.6" width="5" height="5" fill="#e2e2e2"/></svg>
<div class="a" style="left:990px;top:81px;width:7px;height:13px;background:#444;border-radius:3.5px"></div><div class="a" style="left:990px;top:81px;width:7px;height:7px;background:#f0f0f0;border-radius:50%"></div>
<div class="bx" style="left:824px;top:101px;width:84px;height:15px"></div>
<div class="p" style="left:830px;top:103px;color:#ececec">正常</div>
<svg style="left:899px;top:107px" width="7" height="4" viewBox="0 0 7 4"><path d="M0.5 0.5L3.5 3.3L6.5 0.5" fill="none" stroke="#b0b0b0" stroke-width="1.1"/></svg>
<div class="p" style="left:916px;top:103px">不透明度:</div>
<div class="bx" style="left:957px;top:101px;width:27px;height:15px"></div>
<div class="p" style="left:959px;top:103px;font-size:8.5px;color:#ececec">100%</div>
<div class="bx" style="left:986px;top:101px;width:12px;height:15px"></div>
<svg style="left:989px;top:107px" width="7" height="4" viewBox="0 0 7 4"><path d="M0.5 0.5L3.5 3.3L6.5 0.5" fill="none" stroke="#b0b0b0" stroke-width="1.1"/></svg>
<div class="p" style="left:826px;top:122px">锁定:</div>
<svg style="left:853px;top:124px" width="9" height="9" viewBox="0 0 9 9"><rect x="0.5" y="0.5" width="8" height="8" fill="none" stroke="#a8a8a8" stroke-width="0.9"/><rect x="0.5" y="0.5" width="4" height="4" fill="#a8a8a8"/><rect x="4.5" y="4.5" width="4" height="4" fill="#a8a8a8"/></svg>
<svg style="left:868px;top:123px" width="10" height="11" viewBox="0 0 10 11"><path d="M9.6 0.4C7.6 1.8 5.2 4.4 4.2 6.2L5.4 7.2C7 5.8 8.8 3.2 9.6 0.4Z" fill="#b8b8b8"/><path d="M3.6 6.8C2.4 6.8 2 8 1.9 8.8C1.8 9.6 1.1 10 0.5 10.2C2.4 10.8 4.8 9.9 4.8 8Z" fill="#b8b8b8"/></svg>
<svg style="left:884px;top:123px" width="11" height="11" viewBox="0 0 12 12"><path d="M6 0.3L8 2.6H6.7V5.3H9.4V4L11.7 6L9.4 8V6.7H6.7V9.4H8L6 11.7L4 9.4H5.3V6.7H2.6V8L0.3 6L2.6 4V5.3H5.3V2.6H4Z" fill="#e2e2e2"/></svg>
<svg style="left:900px;top:123px" width="11" height="11" viewBox="0 0 11 11"><path d="M2.6 0V8.4H11M0 2.6H8.4V6" fill="none" stroke="#e2e2e2" stroke-width="1.3"/><rect x="7.4" y="6.6" width="3.4" height="3" fill="#e2e2e2"/></svg>
<svg style="left:917px;top:122px" width="9" height="11" viewBox="0 0 9 11"><path d="M2.2 5V3.2A2.3 2.3 0 0 1 6.8 3.2V5" fill="none" stroke="#e2e2e2" stroke-width="1.3"/><rect x="0.5" y="4.8" width="8" height="5.8" fill="#e2e2e2"/></svg>
<div class="p" style="left:933px;top:122px">填充:</div>
<div class="bx" style="left:957px;top:120px;width:27px;height:15px"></div>
<div class="p" style="left:959px;top:122px;font-size:8.5px;color:#ececec">100%</div>
<div class="bx" style="left:986px;top:120px;width:12px;height:15px"></div>
<svg style="left:989px;top:126px" width="7" height="4" viewBox="0 0 7 4"><path d="M0.5 0.5L3.5 3.3L6.5 0.5" fill="none" stroke="#b0b0b0" stroke-width="1.1"/></svg>
<div class="a" style="left:822px;top:138px;width:178px;height:1px;background:#484848"></div>
<div class="a" style="left:842px;top:139px;width:146px;height:28px;background:#696969"></div>
<div class="a" style="left:822px;top:167px;width:166px;height:1px;background:#464646"></div>
<div class="a" style="left:822px;top:196px;width:166px;height:1px;background:#464646"></div>
<div class="a" style="left:988px;top:139px;width:12px;height:372px;background:#4b4b4b"></div>
<svg style="left:826px;top:149px" width="12" height="8" viewBox="0 0 12 8"><path d="M0.3 4C2 1.2 4 0.3 6 0.3S10 1.2 11.7 4C10 6.8 8 7.7 6 7.7S2 6.8 0.3 4Z" fill="#e2e2e2"/><circle cx="6" cy="4" r="2.1" fill="#4a4a4a"/><circle cx="6" cy="4" r="0.9" fill="#e2e2e2"/></svg>
<svg style="left:826px;top:178px" width="12" height="8" viewBox="0 0 12 8"><path d="M0.3 4C2 1.2 4 0.3 6 0.3S10 1.2 11.7 4C10 6.8 8 7.7 6 7.7S2 6.8 0.3 4Z" fill="#e2e2e2"/><circle cx="6" cy="4" r="2.1" fill="#4a4a4a"/><circle cx="6" cy="4" r="0.9" fill="#e2e2e2"/></svg>
<svg style="left:844px;top:139px" width="27" height="28" viewBox="0 0 27 28"><defs><pattern id="ck" width="6" height="6" patternUnits="userSpaceOnUse"><rect width="6" height="6" fill="#fff"/><rect width="3" height="3" fill="#d2d2d2"/><rect x="3" y="3" width="3" height="3" fill="#d2d2d2"/></pattern></defs>
<rect x="2" y="2" width="23" height="23.5" fill="url(#ck)"/>
<path d="M0.6 6V0.6H6M21 0.6H26.4V6M26.4 22V27.4H21M6 27.4H0.6V22" fill="none" stroke="#f4f4f4" stroke-width="1.2"/>
<rect x="15.5" y="16.5" width="10" height="10" fill="#5a5a5a" stroke="#f0f0f0" stroke-width="1"/>
<rect x="18" y="19" width="5" height="5" fill="none" stroke="#f0f0f0" stroke-width="0.9"/><rect x="17" y="18" width="2" height="2" fill="#f0f0f0"/><rect x="22" y="18" width="2" height="2" fill="#f0f0f0"/><rect x="17" y="23" width="2" height="2" fill="#f0f0f0"/><rect x="22" y="23" width="2" height="2" fill="#f0f0f0"/>
</svg>
<div class="p" style="left:876px;top:147px;color:#f2f2f2">圆角矩形 1</div>
<div class="a" style="left:846px;top:170px;width:23px;height:23px;background:#fff"></div>
<div class="p" style="left:876px;top:176px;color:#e6e6e6">背景</div>
<svg style="left:968px;top:177px" width="8" height="10" viewBox="0 0 8 10"><path d="M2 4.4V2.8A2 2 0 0 1 6 2.8V4.4" fill="none" stroke="#dcdcdc" stroke-width="1.1"/><rect x="0.6" y="4.4" width="6.8" height="5" fill="none" stroke="#dcdcdc" stroke-width="1.1"/></svg>
<div class="a" style="left:822px;top:197px;width:166px;height:315px;background:#4d4d4d"></div>
<div class="a" style="left:996px;top:139px;width:4px;height:373px;background:#474747"></div>
<div class="a" style="left:822px;top:512px;width:178px;height:17px;background:#4f4f4f"></div>
<svg style="left:850px;top:517px" width="12" height="6" viewBox="0 0 12 6"><rect x="0.7" y="0.7" width="5.6" height="4.6" rx="2.3" fill="none" stroke="#8a8a8a" stroke-width="1.3"/><rect x="5.7" y="0.7" width="5.6" height="4.6" rx="2.3" fill="none" stroke="#8a8a8a" stroke-width="1.3"/></svg>
<div class="a" style="left:871px;top:513px;font-family:'Liberation Serif',serif;font-style:italic;font-weight:bold;font-size:11px;line-height:13px;color:#e2e2e2;letter-spacing:-0.5px">fx</div>
<svg style="left:890px;top:516px" width="10" height="9" viewBox="0 0 10 9"><rect width="10" height="9" fill="#e2e2e2"/><circle cx="5" cy="4.5" r="2.6" fill="#444"/></svg>
<svg style="left:911px;top:516px" width="9" height="9" viewBox="0 0 9 9"><circle cx="4.5" cy="4.5" r="3.8" fill="none" stroke="#e2e2e2" stroke-width="1.2"/><path d="M4.5 0.7A3.8 3.8 0 0 0 1.8 7.2L7.2 1.8A3.8 3.8 0 0 0 4.5 0.7Z" fill="#e2e2e2"/></svg>
<svg style="left:930px;top:516px" width="10" height="9" viewBox="0 0 10 9"><path d="M0 1H3.6L4.6 2.2H10V9H0Z" fill="#e2e2e2"/></svg>
<svg style="left:950px;top:516px" width="9" height="9" viewBox="0 0 9 9"><path d="M0.7 0.7H8.3V8.3H3.6L0.7 5.4Z" fill="none" stroke="#e2e2e2" stroke-width="1.3"/><path d="M0.7 5.4H3.6V8.3" fill="none" stroke="#e2e2e2" stroke-width="1"/></svg>
<svg style="left:970px;top:515px" width="9" height="10" viewBox="0 0 9 10"><path d="M0 2H9M3 2V0.6H6V2" fill="none" stroke="#e2e2e2" stroke-width="1.2"/><path d="M1 3.2H8L7.4 10H1.6Z" fill="#e2e2e2"/></svg>
<div class="a" style="left:880px;top:524px;width:2px;height:2px;background:#ccc"></div><div class="a" style="left:921px;top:525px;width:2px;height:2px;background:#ccc"></div>
<svg style="left:917px;top:498px" width="8" height="8" viewBox="0 0 8 8"><path d="M1 5.2C3.5 6.4 6.4 4.8 6.6 1.4C8 5 4 8.4 1 5.2Z" fill="#d8d8d8"/></svg>
<div class="a" style="left:986px;top:494px;width:36px;height:36px;border-radius:50%;background:radial-gradient(circle closest-side at 50% 50%,#36c258 0,#3cc65c 78%,#7fdc94 90%,#c8f2d0 100%);overflow:hidden"></div>
<div class="a" style="left:991px;top:505px;font-size:8.5px;line-height:12px;color:#f4fff6;white-space:nowrap;width:9px;overflow:hidden">38</div>
<div class="a" style="left:622px;top:308px;width:211px;height:221px;background:#535353;border-left:1px solid #3a3a3a;border-top:1px solid #3a3a3a"></div>
<div class="a" style="left:623px;top:309px;width:210px;height:11px;background:#404040"></div>
<div class="a" style="left:623px;top:320px;width:210px;height:19px;background:#424242"></div>
<div class="a" style="left:623px;top:320px;width:30px;height:19px;background:#535353"></div>
<div class="p" style="left:631px;top:323px;font-size:8.5px;color:#eee">属性</div>
<svg style="left:810px;top:312px" width="6" height="4" viewBox="0 0 6 4"><path d="M2.5 0L0.5 2L2.5 4M5.5 0L3.5 2L5.5 4" fill="none" stroke="#cfcfcf" stroke-width="1"/></svg>
<svg style="left:823px;top:311px" width="6" height="6" viewBox="0 0 6 6"><path d="M0.5 0.5L5.5 5.5M5.5 0.5L0.5 5.5" stroke="#d8d8d8" stroke-width="1.2"/></svg>
<div class="a" style="left:821px;top:326px;width:7px;height:1px;background:#a4a4a4;box-shadow:0 2px 0 #a4a4a4,0 4px 0 #a4a4a4"></div>
<div class="a" style="left:822px;top:339px;width:11px;height:190px;background:#4a4a4a;border-left:1px solid #444"></div>
<div class="a" style="left:632px;top:344px;width:14px;height:14px;background:#383838"></div>
<svg style="left:634px;top:346px" width="10" height="10" viewBox="0 0 10 10"><rect x="1.6" y="1.6" width="6.8" height="6.8" fill="none" stroke="#e2e2e2" stroke-width="1.1"/><rect x="0" y="0" width="2.6" height="2.6" fill="#e2e2e2"/><rect x="7.4" y="0" width="2.6" height="2.6" fill="#e2e2e2"/><rect x="0" y="7.4" width="2.6" height="2.6" fill="#e2e2e2"/><rect x="7.4" y="7.4" width="2.6" height="2.6" fill="#e2e2e2"/></svg>
<svg style="left:651px;top:346px" width="13" height="10" viewBox="0 0 13 10"><rect width="13" height="10" fill="#e2e2e2"/><circle cx="6.5" cy="5" r="3" fill="#444"/></svg>
<div class="p" style="left:670px;top:346px;font-size:8.7px">实时形状属性</div>
<div class="a" style="left:627px;top:364px;width:143px;height:1px;background:#4a4a4a"></div>
<div class="p" style="left:631px;top:373px;font-size:8.5px;color:#c8c8c8;">W:</div>
<div class="bx" style="left:645px;top:372px;width:40px;height:14px"></div>
<div class="p" style="left:648px;top:373px;font-size:8.3px;color:#e8e8e8;">100 像素</div>
<svg style="left:692px;top:375px" width="12" height="6" viewBox="0 0 12 6"><rect x="0.7" y="0.7" width="5.6" height="4.6" rx="2.3" fill="none" stroke="#c4c4c4" stroke-width="1.2"/><rect x="5.7" y="0.7" width="5.6" height="4.6" rx="2.3" fill="none" stroke="#c4c4c4" stroke-width="1.2"/></svg>
<div class="p" style="left:714px;top:373px;font-size:8.5px;color:#c8c8c8;">H:</div>
<div class="bx" style="left:725px;top:372px;width:40px;height:14px"></div>
<div class="p" style="left:728px;top:373px;font-size:8.3px;color:#e8e8e8;">36 像素</div>
<div class="p" style="left:635px;top:393px;font-size:8.5px;color:#c8c8c8;">X:</div>
<div class="bx" style="left:645px;top:392px;width:40px;height:14px"></div>
<div class="p" style="left:648px;top:393px;font-size:8.3px;color:#e8e8e8;width:36px;overflow:hidden">109.99 像素</div>
<div class="p" style="left:716px;top:393px;font-size:8.5px;color:#c8c8c8;">Y:</div>
<div class="bx" style="left:725px;top:392px;width:40px;height:14px"></div>
<div class="p" style="left:728px;top:393px;font-size:8.3px;color:#e8e8e8;">147 像素</div>
<div class="a" style="left:630px;top:415px;width:20px;height:12px;background:#fff;border:1px solid #bdbdbd"></div>
<svg style="left:631px;top:416px" width="18" height="10" viewBox="0 0 18 10"><path d="M0.5 9.5L17.5 0.5" stroke="#e0352f" stroke-width="1.4"/></svg>
<div class="a" style="left:654px;top:414px;width:21px;height:14px;background:#3c3c3c;border:1px solid #6a6a6a"></div>
<div class="a" style="left:658px;top:418px;width:14px;height:6px;border:1px solid #dcdcdc"></div>
<div class="bx" style="left:679px;top:414px;width:46px;height:14px"></div>
<div class="p" style="left:682px;top:415px;font-size:8.3px;color:#e8e8e8;">5 像素</div>
<div class="bx" style="left:727px;top:414px;width:11px;height:14px"></div>
<svg style="left:729px;top:420px" width="7" height="4" viewBox="0 0 7 4"><path d="M0.5 0.5L3.5 3.3L6.5 0.5" fill="none" stroke="#b0b0b0" stroke-width="1.1"/></svg>
<div class="bx" style="left:742px;top:414px;width:24px;height:14px"></div>
<div class="a" style="left:745px;top:420px;width:10px;height:2px;background:#ececec"></div>
<svg style="left:757px;top:420px" width="7" height="4" viewBox="0 0 7 4"><path d="M0.5 0.5L3.5 3.3L6.5 0.5" fill="none" stroke="#b0b0b0" stroke-width="1.1"/></svg>
<div class="bx" style="left:630px;top:432px;width:45px;height:15px"></div>
<div class="bx" style="left:679px;top:432px;width:46px;height:15px"></div>
<div class="bx" style="left:732px;top:432px;width:34px;height:15px"></div>
<svg style="left:636px;top:435px" width="9" height="9" viewBox="0 0 9 9"><rect x="1" y="1" width="7" height="7" fill="none" stroke="#e2e2e2" stroke-width="2"/></svg>
<svg style="left:666px;top:438px" width="7" height="4" viewBox="0 0 7 4"><path d="M0.5 0.5L3.5 3.3L6.5 0.5" fill="none" stroke="#b0b0b0" stroke-width="1.1"/></svg>
<svg style="left:686px;top:435px" width="9" height="9" viewBox="0 0 9 9"><path d="M3 0H9V9H3V6.4H0V2.6H3Z" fill="#e2e2e2"/><rect x="4.6" y="3.2" width="2.4" height="2.6" fill="#454545"/></svg>
<svg style="left:717px;top:438px" width="7" height="4" viewBox="0 0 7 4"><path d="M0.5 0.5L3.5 3.3L6.5 0.5" fill="none" stroke="#b0b0b0" stroke-width="1.1"/></svg>
<svg style="left:737px;top:435px" width="10" height="10" viewBox="0 0 10 10"><path d="M0 0H10V4.4H4.4V10H0Z" fill="#e2e2e2"/><rect x="5.6" y="5.6" width="4.4" height="4.4" fill="#e2e2e2"/><rect x="2" y="2" width="2.2" height="2.2" fill="#454545"/></svg>
<svg style="left:757px;top:438px" width="7" height="4" viewBox="0 0 7 4"><path d="M0.5 0.5L3.5 3.3L6.5 0.5" fill="none" stroke="#b0b0b0" stroke-width="1.1"/></svg>
<div class="a" style="left:627px;top:450px;width:143px;height:1px;background:#4a4a4a"></div>
<div class="bx" style="left:641px;top:455px;width:125px;height:13px"></div>
<div class="p" style="left:644px;top:455px;font-size:8.3px;color:#e8e8e8;">10像素10像素10像素10像素</div>
<svg style="left:631px;top:473px" width="11" height="11" viewBox="0 0 11 11"><path d="M0.6 10.4V4A3.4 3.4 0 0 1 4 0.6H10.4V10.4Z" fill="none" stroke="#d6d6d6" stroke-width="1.1"/></svg>
<div class="bx" style="left:645px;top:472px;width:50px;height:13px"></div>
<div class="p" style="left:649px;top:472px;font-size:8.3px;color:#e8e8e8;">10 像素</div>
<div class="bx" style="left:698px;top:472px;width:50px;height:13px"></div>
<div class="p" style="left:702px;top:472px;font-size:8.3px;color:#e8e8e8;">10 像素</div>
<svg style="left:754px;top:473px" width="11" height="11" viewBox="0 0 11 11"><path d="M0.6 10.4V0.6H7" fill="none" stroke="#d6d6d6" stroke-width="1.1"/></svg>
<div class="a" style="left:689px;top:488px;width:18px;height:18px;background:#383838"></div>
<svg style="left:692px;top:494px" width="12" height="6" viewBox="0 0 12 6"><rect x="0.7" y="0.7" width="5.6" height="4.6" rx="2.3" fill="none" stroke="#dcdcdc" stroke-width="1.2"/><rect x="5.7" y="0.7" width="5.6" height="4.6" rx="2.3" fill="none" stroke="#dcdcdc" stroke-width="1.2"/></svg>
<svg style="left:631px;top:512px" width="11" height="11" viewBox="0 0 11 11"><path d="M0.6 0.6H10.4V10.4H4A3.4 3.4 0 0 1 0.6 7Z" fill="none" stroke="#d6d6d6" stroke-width="1.1"/></svg>
<div class="bx" style="left:645px;top:511px;width:50px;height:13px"></div>
<div class="p" style="left:649px;top:511px;font-size:8.3px;color:#e8e8e8;">10 像素</div>
<div class="bx" style="left:698px;top:511px;width:50px;height:13px"></div>
<div class="p" style="left:702px;top:511px;font-size:8.3px;color:#e8e8e8;">10 像素</div>
<svg style="left:754px;top:512px" width="11" height="11" viewBox="0 0 11 11"><path d="M0.6 0.6H10.4V7A3.4 3.4 0 0 1 7 10.4H0.6Z" fill="none" stroke="#d6d6d6" stroke-width="1.1"/></svg>
<div class="a" id="bottom"></div>
</body>
</html>
